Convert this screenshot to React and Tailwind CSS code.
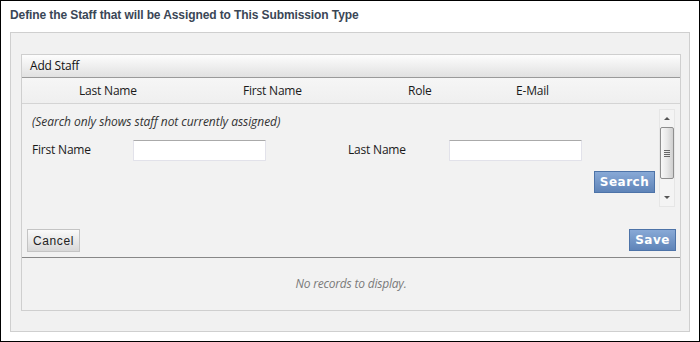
export default function App() {
  const ui = { fontFamily: '"Open Sans", "Noto Sans", sans-serif' }
  const btnBlue =
    'h-[22px] border border-[#4d73a8] bg-gradient-to-b from-[#88a9d6] to-[#5f84b8] text-white font-bold text-[12px] tracking-[0.5px]'

  return (
    <div className="w-[700px] h-[342px] border border-black bg-white overflow-hidden">
      {/* title */}
      <div
        className="h-[31px] pl-[9px] pt-[6px] text-[12px] font-bold text-[#3a4656] leading-[16px] tracking-[-0.1px]"
        style={{ fontFamily: '"Liberation Sans", Arial, sans-serif' }}
      >
        Define the Staff that will be Assigned to This Submission Type
      </div>

      {/* outer panel */}
      <div className="ml-[9px] w-[680px] h-[300px] border border-[#cfcfcf] bg-[#f1f1f1] pl-[10px] pt-[21px]">
        {/* grid */}
        <div className="w-[660px] h-[257px] border border-[#cfcfcf] bg-[#f2f2f2] tracking-[-0.2px]" style={ui}>
          {/* caption */}
          <div className="h-[23px] border-b border-[#9a9a9a] bg-gradient-to-b from-[#fdfdfd] to-[#e1e1e1] pl-[8px] text-[12px] leading-[22px] text-[#111]">
            Add Staff
          </div>

          {/* column headers */}
          <div className="h-[26px] flex items-center border-b border-[#d4d4d4] bg-gradient-to-b from-[#f6f6f6] to-[#efefef] pl-[57px] text-[12px] text-[#1a1a1a]">
            <div className="w-[164px]">Last Name</div>
            <div className="w-[165px]">First Name</div>
            <div className="w-[108px]">Role</div>
            <div>E-Mail</div>
          </div>

          {/* edit form */}
          <div className="h-[154px] border-b border-[#888]">
            <div className="h-[108px] flex">
              <div className="flex-1 pl-[10px] pt-[10px]">
                <div className="text-[12px] leading-[16px] italic text-[#333] tracking-[-0.05px]">
                  (Search only shows staff not currently assigned)
                </div>
                <div className="mt-[10px] h-[20px] flex items-center text-[12px] text-[#1a1a1a]">
                  <div className="w-[101px]">First Name</div>
                  <div className="w-[133px] h-[21px] bg-white border border-[#e2e2ea] border-t-[#aaaaaa] rounded-[1px]" />
                  <div className="ml-[82px] w-[101px]">Last Name</div>
                  <div className="w-[133px] h-[21px] bg-white border border-[#e2e2ea] border-t-[#aaaaaa] rounded-[1px]" />
                </div>
                <div className="mt-[11px] flex justify-end pr-[4px]">
                  <button
                    className={`${btnBlue} w-[61px]`}
                    style={{ fontFamily: '"DejaVu Sans", Verdana, sans-serif' }}
                  >
                    Search
                  </button>
                </div>
              </div>

              {/* scrollbar */}
              <div className="mt-[5px] mr-[5px] w-[16px] h-[98px] bg-[#f4f4f4] border border-[#e6e6e6] flex flex-col items-center">
                <div className="h-[17px] flex items-center justify-center">
                  <div className="w-0 h-0 border-l-[3px] border-r-[3px] border-b-[3px] border-l-transparent border-r-transparent border-b-[#555]" />
                </div>
                <div className="w-[14px] h-[52px] rounded-[2px] border border-[#8e8e8e] bg-gradient-to-r from-[#f8f8f8] via-[#e8e8e8] to-[#cfcfcf] flex flex-col items-center justify-center gap-[1px]">
                  <div className="w-[6px] h-px bg-[#666]" />
                  <div className="w-[6px] h-px bg-[#666]" />
                  <div className="w-[6px] h-px bg-[#666]" />
                  <div className="w-[6px] h-px bg-[#666]" />
                </div>
                <div className="flex-1" />
                <div className="h-[17px] flex items-center justify-center">
                  <div className="w-0 h-0 border-l-[3px] border-r-[3px] border-t-[3px] border-l-transparent border-r-transparent border-t-[#555]" />
                </div>
              </div>
            </div>

            {/* buttons */}
            <div className="mt-[17px] flex items-start justify-between pl-[5px] pr-[4px]">
              <button
                className="w-[53px] h-[23px] border border-[#c4c4c4] bg-gradient-to-b from-[#fafafa] to-[#d9d9d9] text-[12px] text-[#222] tracking-[0.6px]"
                style={{ fontFamily: '"Liberation Sans", Arial, sans-serif' }}
              >
                Cancel
              </button>
              <button
                className={`${btnBlue} w-[47px]`}
                style={{ fontFamily: '"DejaVu Sans", Verdana, sans-serif' }}
              >
                Save
              </button>
            </div>
          </div>

          {/* no records */}
          <div className="h-[52px] flex items-center justify-center text-[12px] italic text-[#7a7a7a]">
            No records to display.
          </div>
        </div>
      </div>
    </div>
  )
}
